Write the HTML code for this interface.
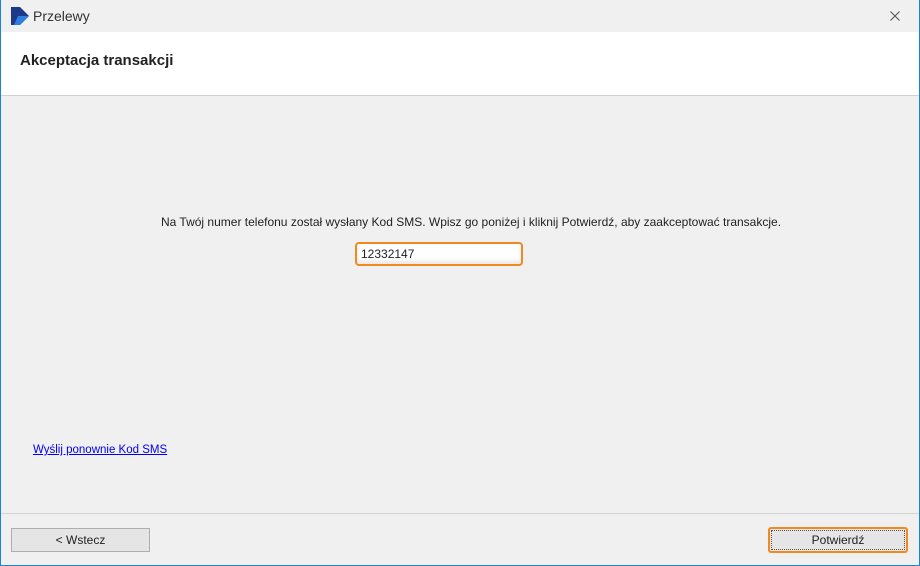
<!DOCTYPE html>
<html><head><meta charset="utf-8"><style>
body{margin:0;width:920px;height:566px;overflow:hidden;font-family:"Liberation Sans","DejaVu Sans",sans-serif;}
*{box-sizing:border-box;}
.win{position:absolute;left:0;top:0;width:920px;height:566px;border:1px solid #1883d7;border-top:none;background:#f0f0f0;}
.title{position:absolute;left:0;top:0;width:918px;height:32px;background:#f0f0f0;}
.title span{position:absolute;left:32px;top:8px;font-size:14px;color:#333;}
.head{position:absolute;left:0;top:32px;width:918px;height:64px;background:#fff;border-bottom:1px solid #d0d0d0;}
.head b{position:absolute;left:19px;top:20px;font-size:15px;color:#222;}
.msg{position:absolute;left:0;width:918px;top:215px;text-align:center;font-size:12px;color:#222;padding-left:22px;}
.inp{position:absolute;left:354px;top:242px;width:168px;height:24px;border:2px solid #f08a1e;border-radius:4px;background:#fff;font-size:12px;color:#222;line-height:20px;padding-left:4px;box-shadow:inset 0 -3px 4px #e8e8e8;}
.link{position:absolute;left:32px;top:444px;font-size:11.5px;color:#0000ee;text-decoration:underline;}
.sep{position:absolute;left:0;top:513px;width:918px;height:1px;background:#d6d6d6;}
.btn{position:absolute;top:528px;height:24px;background:#e5e5e5;border:1px solid #adadad;font-size:12px;color:#222;text-align:center;line-height:22px;}
</style></head><body>
<div class="win">
<div class="title">
<svg style="position:absolute;left:9px;top:6px" width="20" height="20" viewBox="0 0 20 20"><polygon points="1,1 10,1 19,10 10,19 1,19" fill="#1d3a8a"/><polygon points="8,10 19,10 10,19 4,19" fill="#2f7de0"/></svg>
<span>Przelewy</span>
<svg style="position:absolute;left:889px;top:11px" width="10" height="10" viewBox="0 0 10 10"><path d="M0.5 0.5L9.5 9.5M9.5 0.5L0.5 9.5" stroke="#555" stroke-width="1.1"/></svg>
</div>
<div class="head"><b>Akceptacja transakcji</b></div>
<div class="msg">Na Twój numer telefonu został wysłany Kod SMS. Wpisz go poniżej i kliknij Potwierdź, aby zaakceptować transakcje.</div>
<div class="inp">12332147</div>
<div class="link">Wyślij ponownie Kod SMS</div>
<div class="sep"></div>
<div class="btn" style="left:10px;width:139px;">&lt; Wstecz</div>
<div class="btn" style="left:767px;width:140px;border:2px solid #f08a1e;border-radius:3px;top:527px;height:26px;outline:1px dotted #555;outline-offset:-4px;">Potwierdź</div>
</div>
</body></html>
